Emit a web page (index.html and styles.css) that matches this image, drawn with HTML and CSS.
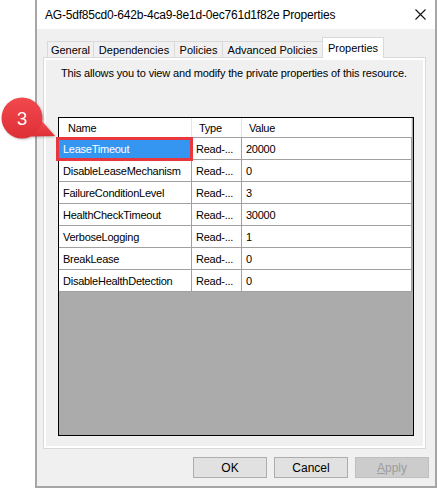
FILE: index.html
```html
<!DOCTYPE html>
<html>
<head>
<meta charset="utf-8">
<link rel="stylesheet" href="styles.css">
</head>
<body>
<div class="window">
  <div class="titlebar">
    <span class="title">AG-5df85cd0-642b-4ca9-8e1d-0ec761d1f82e Properties</span>
    <svg class="close" width="11" height="11" viewBox="0 0 11 11"><path d="M0.5 0.5 L10.5 10.5 M10.5 0.5 L0.5 10.5" stroke="#111" stroke-width="1.1" fill="none"/></svg>
  </div>
  <div class="body">
    <div class="tabs">
      <div class="tab t-general">General</div>
      <div class="tab t-deps">Dependencies</div>
      <div class="tab t-pol">Policies</div>
      <div class="tab t-adv">Advanced Policies</div>
      <div class="tab t-props active">Properties</div>
    </div>
    <div class="panel">
      <div class="panel-inner">
        <p class="desc">This allows you to view and modify the private properties of this resource.</p>
        <div class="listview">
          <div class="lv-header">
            <div class="hcell h-name">Name</div>
            <div class="hcell">Type</div>
            <div class="hcell">Value</div>
          </div>
          <div class="lv-row"><div class="cell selected">LeaseTimeout</div><div class="cell">Read-...</div><div class="cell">20000</div></div>
          <div class="lv-row"><div class="cell">DisableLeaseMechanism</div><div class="cell">Read-...</div><div class="cell">0</div></div>
          <div class="lv-row"><div class="cell">FailureConditionLevel</div><div class="cell">Read-...</div><div class="cell">3</div></div>
          <div class="lv-row"><div class="cell">HealthCheckTimeout</div><div class="cell">Read-...</div><div class="cell">30000</div></div>
          <div class="lv-row"><div class="cell">VerboseLogging</div><div class="cell">Read-...</div><div class="cell">1</div></div>
          <div class="lv-row"><div class="cell">BreakLease</div><div class="cell">Read-...</div><div class="cell">0</div></div>
          <div class="lv-row"><div class="cell">DisableHealthDetection</div><div class="cell">Read-...</div><div class="cell">0</div></div>
        </div>
      </div>
    </div>
    <div class="buttons">
      <div class="btn">OK</div>
      <div class="btn">Cancel</div>
      <div class="btn disabled"><u>A</u>pply</div>
    </div>
  </div>
</div>
<svg class="callout" width="60" height="48" viewBox="0 0 60 48">
  <defs>
    <linearGradient id="rg" x1="0" y1="0" x2="0" y2="1">
      <stop offset="0" stop-color="#f2494e"/>
      <stop offset="1" stop-color="#dd2f36"/>
    </linearGradient>
  </defs>
  <path d="M42.2 26.6 L55 41 L30.7 41.6 Z" fill="url(#rg)"/>
  <circle cx="22" cy="23" r="20.5" fill="url(#rg)"/>
  <text x="22" y="30" text-anchor="middle" class="callout-num">3</text>
</svg>
</body>
</html>
```
FILE: styles.css
```css
* { box-sizing: border-box; }

body {
  margin: 0;
  width: 437px;
  height: 488px;
  overflow: hidden;
  position: relative;
  background: #ffffff;
  font-family: "Liberation Sans", Arial, sans-serif;
  color: #000;
}

.window {
  margin-left: 35px;
  width: 402px;
  height: 488px;
  border: 2px solid #a6a6a6;
  border-top: none;
  background: #f0f0f0;
  display: flex;
  flex-direction: column;
}

.titlebar {
  height: 29px;
  background: #ffffff;
  display: flex;
  align-items: center;
  justify-content: space-between;
  padding: 0 9px 0 8px;
  font-size: 12px;
}

.title { padding-top: 1px; letter-spacing: -0.2px; }

.close { display: block; }

.body {
  flex: 1;
  display: flex;
  flex-direction: column;
  padding: 8px 0 8px 0;
}

.tabs {
  display: flex;
  align-items: flex-end;
  height: 20px;
  margin-left: 10px;
  position: relative;
  z-index: 2;
}

.tab {
  height: 16px;
  border: 1px solid #d9d9d9;
  border-bottom: none;
  margin-left: -1px;
  font-size: 11px;
  display: flex;
  align-items: center;
  justify-content: center;
  background: #f0f0f0;
  padding-top: 1px;
}

.tab:first-child { margin-left: 0; }

.t-general { width: 47px; }
.t-deps { width: 82px; }
.t-pol { width: 49px; }
.t-adv { width: 101px; }
.t-props { width: 62px; }

.tab.active {
  height: 21px;
  margin-bottom: -1px;
  background: #ffffff;
  align-items: flex-start;
  padding-top: 4px;
}

.panel {
  margin-left: 6px;
  width: 383px;
  height: 392px;
  border: 1px solid #d9d9d9;
  background: #ffffff;
  padding: 2px;
}

.panel-inner {
  height: 100%;
  background: #f0f0f0;
  display: flex;
  flex-direction: column;
  padding: 7px 9px 10px 12px;
}

.desc {
  margin: 0 0 37px 3px;
  font-size: 11px;
  line-height: 13px;
  white-space: nowrap;
  letter-spacing: -0.15px;
}

.listview {
  flex: 1;
  border: 1px solid #000;
  background: #ababab;
  font-size: 11px;
  letter-spacing: -0.25px;
}

.lv-header {
  display: grid;
  grid-template-columns: 133px 50px 170px;
  height: 20px;
  background: #ffffff;
  border-bottom: 1px solid #a0a0a0;
  width: 353px;
}

.hcell {
  border-right: 1px solid #e5e5e5;
  padding-left: 7px;
  display: flex;
  align-items: center;
  padding-top: 1px;
}

.h-name { padding-left: 9px; }

.lv-row {
  display: grid;
  grid-template-columns: 133px 50px 170px;
  height: 22px;
  width: 353px;
  background: #ffffff;
  border-bottom: 1px solid #a0a0a0;
}

.cell {
  border-right: 1px solid #a0a0a0;
  padding-left: 4px;
  display: flex;
  align-items: center;
  white-space: nowrap;
  overflow: visible;
}

.cell.selected {
  position: relative;
  background: #3596f2;
  color: #ffffff;
}

.cell.selected::after {
  content: "";
  position: absolute;
  top: -1px;
  bottom: -2px;
  left: -3px;
  right: -2px;
  border: 3px solid #e8383e;
}

.buttons {
  display: flex;
  justify-content: flex-end;
  gap: 7px;
  padding-right: 6px;
  margin-top: 8px;
}

.btn {
  width: 74px;
  height: 21px;
  border: 1px solid #adadad;
  background: #e1e1e1;
  font-size: 12px;
  display: flex;
  align-items: center;
  justify-content: center;
}

.btn.disabled {
  background: #cccccc;
  border-color: #bfbfbf;
  color: #9c9c9c;
}

.callout {
  position: absolute;
  left: 0;
  top: 95px;
  filter: drop-shadow(1px 1px 1px rgba(0,0,0,0.25));
}

.callout-num {
  fill: #ffffff;
  font-family: "Liberation Sans", Arial, sans-serif;
  font-size: 19px;
}
```
